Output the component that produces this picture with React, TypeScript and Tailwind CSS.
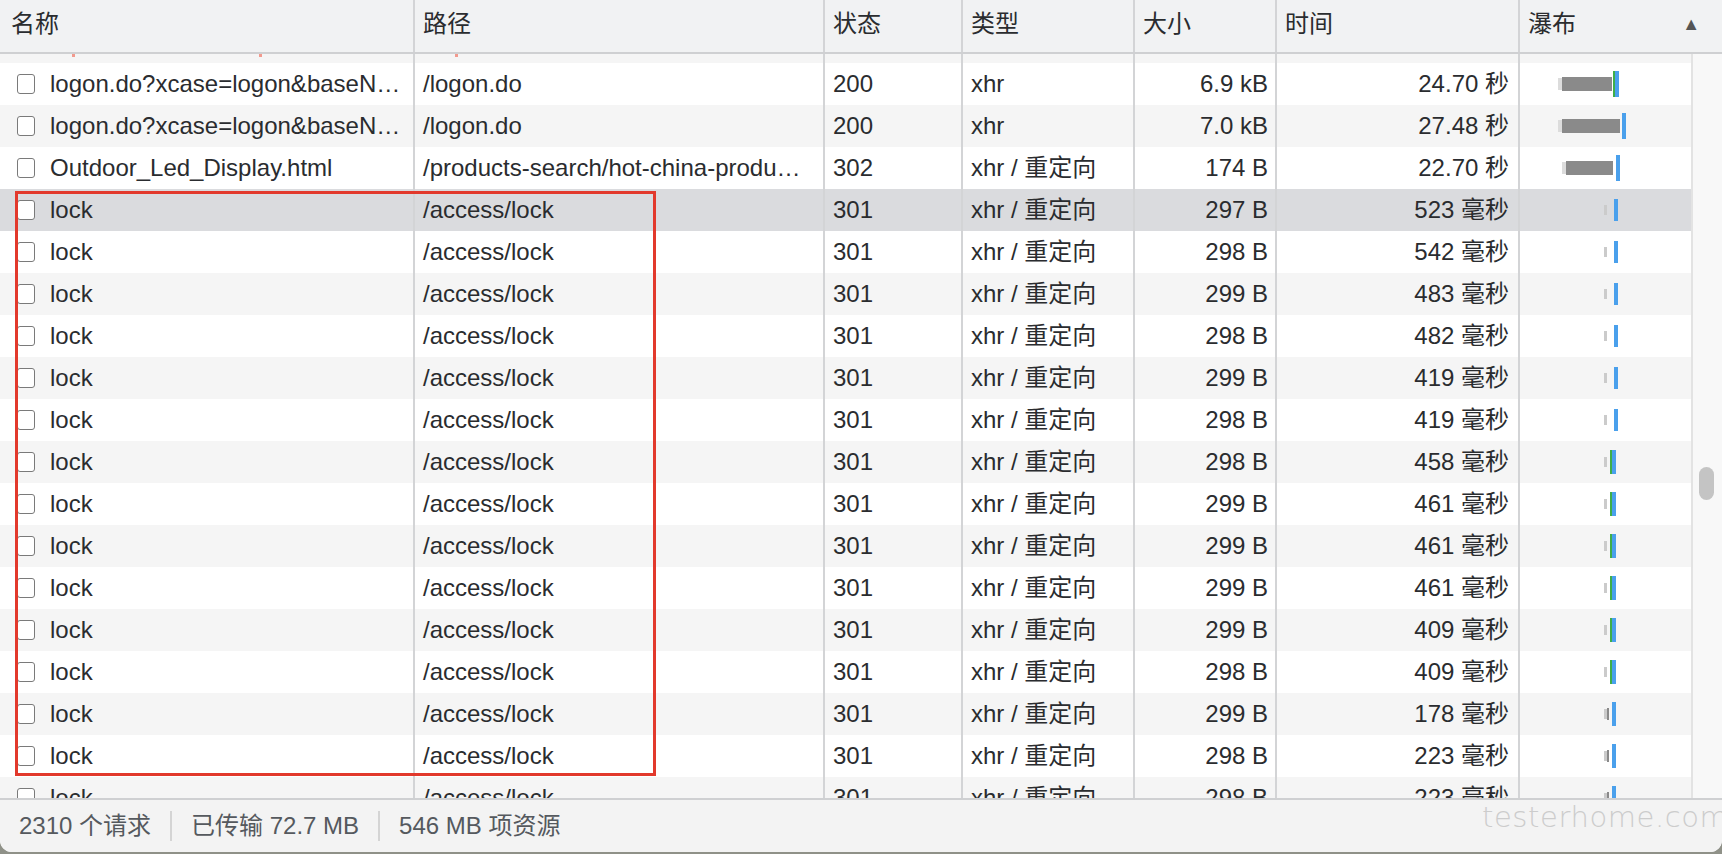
import React from "react";

type Seg = { l: number; w: number; h: number; c: string };

type Row = {
  name: string;
  path: string;
  status: string;
  type: string;
  size: string;
  time: string;
  wf: Seg[];
};

const LIGHT = "#cbcbcb";
const DARK = "#8a8a8a";
const BLUE = "#4aa0ec";
const GREEN = "#3fae49";

// waterfall shapes, offsets from the column's left edge
const wfLong = (a: number, w: number, blue: number, green?: number): Seg[] => [
  { l: a - 4, w: 4, h: 12, c: "#dcdcdc" },
  { l: a, w, h: 14, c: DARK },
  ...(green ? [{ l: green, w: 2, h: 26, c: GREEN }] : []),
  { l: blue, w: 4, h: 26, c: BLUE },
];
const wfBlue: Seg[] = [
  { l: 84, w: 3, h: 10, c: LIGHT },
  { l: 94, w: 4, h: 22, c: BLUE },
];
const wfGreen: Seg[] = [
  { l: 84, w: 3, h: 10, c: LIGHT },
  { l: 90, w: 2, h: 24, c: GREEN },
  { l: 92, w: 4, h: 24, c: BLUE },
];
const wfDark: Seg[] = [
  { l: 84, w: 3, h: 10, c: LIGHT },
  { l: 87, w: 2, h: 12, c: DARK },
  { l: 92, w: 4, h: 24, c: BLUE },
];

const lockData: [string, string, Seg[]][] = [
  ["297 B", "523", wfBlue],
  ["298 B", "542", wfBlue],
  ["299 B", "483", wfBlue],
  ["298 B", "482", wfBlue],
  ["299 B", "419", wfBlue],
  ["298 B", "419", wfBlue],
  ["298 B", "458", wfGreen],
  ["299 B", "461", wfGreen],
  ["299 B", "461", wfGreen],
  ["299 B", "461", wfGreen],
  ["299 B", "409", wfGreen],
  ["298 B", "409", wfGreen],
  ["299 B", "178", wfDark],
  ["298 B", "223", wfDark],
  ["298 B", "223", wfDark],
];

const rows: Row[] = [
  {
    name: "logon.do?xcase=logon&baseN…",
    path: "/logon.do",
    status: "200",
    type: "xhr",
    size: "6.9 kB",
    time: "24.70 秒",
    wf: wfLong(42, 50, 95, 93),
  },
  {
    name: "logon.do?xcase=logon&baseN…",
    path: "/logon.do",
    status: "200",
    type: "xhr",
    size: "7.0 kB",
    time: "27.48 秒",
    wf: wfLong(42, 58, 102),
  },
  {
    name: "Outdoor_Led_Display.html",
    path: "/products-search/hot-china-produ…",
    status: "302",
    type: "xhr / 重定向",
    size: "174 B",
    time: "22.70 秒",
    wf: wfLong(46, 47, 96),
  },
  ...lockData.map(([size, ms, wf]) => ({
    name: "lock",
    path: "/access/lock",
    status: "301",
    type: "xhr / 重定向",
    size,
    time: `${ms} 毫秒`,
    wf,
  })),
];

const cols = "grid grid-cols-[415px_410px_138px_172px_142px_243px_171px]";
const cell = "border-r-2 border-[#d3d4d6] h-full flex items-center overflow-hidden whitespace-nowrap";

function Checkbox() {
  return (
    <span className="inline-block w-[18px] h-[20px] shrink-0 rounded-[3px] border-[1.5px] border-[#7a7a7a] bg-white" />
  );
}

function TableRow({ row, index }: { row: Row; index: number }) {
  const bg = index === 3 ? "bg-[#dadbde]" : index % 2 === 0 ? "bg-white" : "bg-[#f5f5f5]";
  return (
    <div className={`${cols} h-[42px] shrink-0 ${bg}`}>
      <div className={`${cell} pl-[17px] gap-[15px]`}>
        <Checkbox />
        <span>{row.name}</span>
      </div>
      <div className={`${cell} pl-2`}>{row.path}</div>
      <div className={`${cell} pl-2`}>{row.status}</div>
      <div className={`${cell} pl-2`}>{row.type}</div>
      <div className={`${cell} justify-end pr-[7px]`}>{row.size}</div>
      <div className={`${cell} justify-end pr-[9px]`}>{row.time}</div>
      <div className="relative h-full">
        {row.wf.map((s, i) => (
          <span
            key={i}
            className="absolute top-1/2 -translate-y-1/2"
            style={{ left: s.l, width: s.w, height: s.h, background: s.c }}
          />
        ))}
      </div>
    </div>
  );
}

export default function App() {
  const headers = ["名称", "路径", "状态", "类型", "大小", "时间"];
  return (
    <div className="relative w-[1722px] h-[854px] overflow-hidden bg-[#8f9188] font-['Liberation_Sans','Noto_Sans_CJK_SC',sans-serif] text-[24px] text-[#2a2c2f]">
      <div className="flex flex-col h-[852px] rounded-b-[12px] overflow-hidden bg-white">
        {/* header */}
        <div className="flex h-[54px] shrink-0 bg-[#f1f2f3] border-b-2 border-[#cfd0d2]">
          <div className="grid grid-cols-[415px_410px_138px_172px_142px_243px_202px] w-full">
            {headers.map((h, i) => (
              <div
                key={h}
                className={`border-r-2 border-[#d3d4d6] flex items-center pb-1 ${i === 0 ? "pl-[11px]" : "pl-2"}`}
              >
                {h}
              </div>
            ))}
            <div className="flex items-center justify-between pl-2 pr-[22px] pb-1">
              <span>瀑布</span>
              <span className="text-[18px] text-[#555]">▲</span>
            </div>
          </div>
        </div>

        {/* body */}
        <div className="flex h-[744px] shrink-0">
          <div className="w-[1691px] flex flex-col overflow-hidden">
            <div className={`${cols} h-[9px] shrink-0 bg-[#f5f5f5]`}>
              <div className={`${cell} relative`}>
                <span className="absolute left-[72px] top-0 w-[3px] h-[3px] bg-[#f29a8e]" />
                <span className="absolute left-[259px] top-0 w-[3px] h-[3px] bg-[#f29a8e]" />
              </div>
              <div className={`${cell} relative`}>
                <span className="absolute left-[40px] top-0 w-[3px] h-[3px] bg-[#f29a8e]" />
              </div>
              <div className={cell} />
              <div className={cell} />
              <div className={cell} />
              <div className={cell} />
              <div />
            </div>
            {rows.map((r, i) => (
              <TableRow key={i} row={r} index={i} />
            ))}
          </div>
          <div className="relative w-[31px] bg-[#f8f8f8] border-l-2 border-[#e3e3e3]">
            <div className="absolute left-[6px] top-[413px] w-[15px] h-[33px] rounded-full bg-[#c4c4c4]" />
          </div>
        </div>

        {/* footer */}
        <div className="flex items-center h-[54px] shrink-0 bg-[#f3f3f3] border-t-2 border-[#cfd0d2] pl-[19px] text-[24px] text-[#55595e]">
          <span>2310 个请求</span>
          <span className="mx-[19px] w-[2px] h-[30px] bg-[#d4d4d4]" />
          <span>已传输 72.7 MB</span>
          <span className="mx-[19px] w-[2px] h-[30px] bg-[#d4d4d4]" />
          <span>546 MB 项资源</span>
        </div>
      </div>

      {/* red annotation box */}
      <div className="absolute left-[15px] top-[191px] w-[641px] h-[585px] border-[3px] border-[#e2392c]" />

      {/* watermark */}
      <div className="absolute left-[1482px] top-[796px] text-[29px] font-extralight tracking-[0.02em] text-[#cccccc] font-['DejaVu_Sans',sans-serif]">
        testerhome.com
      </div>
    </div>
  );
}
